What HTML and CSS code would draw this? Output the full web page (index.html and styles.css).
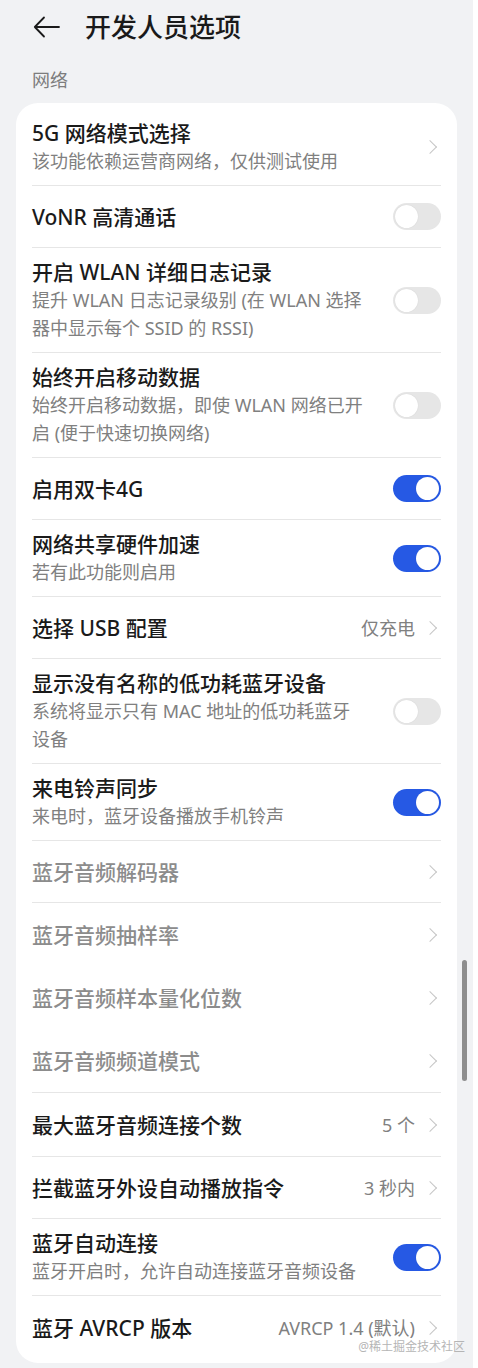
FILE: index.html
```html
<!DOCTYPE html>
<html lang="zh-CN">
<head>
    <meta charset="UTF-8">
    <meta name="viewport" content="width=device-width, initial-scale=1.0">
    <title>开发人员选项</title>
    <link rel="stylesheet" href="styles.css">
</head>
<body>
    <div class="page">
        <!-- Kop -->
        <div class="header">
            <svg class="back" width="27" height="22" viewBox="0 0 27 22">
                <path d="M11 1.5 L1.8 11 L11 20.5 M1.8 11 H26" fill="none" stroke="#1a1a1a" stroke-width="1.8" stroke-linecap="round" stroke-linejoin="round"/>
            </svg>
            <h1>开发人员选项</h1>
        </div>

        <div class="section-label">网络</div>

        <div class="card">
            <div class="row">
                <div class="text">
                    <div class="title">5G 网络模式选择</div>
                    <div class="sub">该功能依赖运营商网络，仅供测试使用</div>
                </div>
                <div class="trail"><span class="chev"></span></div>
            </div>
            <div class="row">
                <div class="text"><div class="title">VoNR 高清通话</div></div>
                <div class="trail"><span class="switch"></span></div>
            </div>
            <div class="row">
                <div class="text">
                    <div class="title">开启 WLAN 详细日志记录</div>
                    <div class="sub">提升 WLAN 日志记录级别 (在 WLAN 选择器中显示每个 SSID 的 RSSI)</div>
                </div>
                <div class="trail"><span class="switch"></span></div>
            </div>
            <div class="row">
                <div class="text">
                    <div class="title">始终开启移动数据</div>
                    <div class="sub">始终开启移动数据，即使 WLAN 网络已开启 (便于快速切换网络)</div>
                </div>
                <div class="trail"><span class="switch"></span></div>
            </div>
            <div class="row">
                <div class="text"><div class="title">启用双卡4G</div></div>
                <div class="trail"><span class="switch on"></span></div>
            </div>
            <div class="row">
                <div class="text">
                    <div class="title">网络共享硬件加速</div>
                    <div class="sub">若有此功能则启用</div>
                </div>
                <div class="trail"><span class="switch on"></span></div>
            </div>
            <div class="row">
                <div class="text"><div class="title">选择 USB 配置</div></div>
                <div class="trail"><span class="value">仅充电</span><span class="chev"></span></div>
            </div>
            <div class="row">
                <div class="text">
                    <div class="title">显示没有名称的低功耗蓝牙设备</div>
                    <div class="sub">系统将显示只有 MAC 地址的低功耗蓝牙设备</div>
                </div>
                <div class="trail"><span class="switch"></span></div>
            </div>
            <div class="row">
                <div class="text">
                    <div class="title">来电铃声同步</div>
                    <div class="sub">来电时，蓝牙设备播放手机铃声</div>
                </div>
                <div class="trail"><span class="switch on"></span></div>
            </div>
            <div class="row disabled">
                <div class="text"><div class="title">蓝牙音频解码器</div></div>
                <div class="trail"><span class="chev"></span></div>
            </div>
            <div class="row disabled no-line">
                <div class="text"><div class="title">蓝牙音频抽样率</div></div>
                <div class="trail"><span class="chev"></span></div>
            </div>
            <div class="row disabled no-line">
                <div class="text"><div class="title">蓝牙音频样本量化位数</div></div>
                <div class="trail"><span class="chev"></span></div>
            </div>
            <div class="row disabled wide">
                <div class="text"><div class="title">蓝牙音频频道模式</div></div>
                <div class="trail"><span class="chev"></span></div>
            </div>
            <div class="row wide">
                <div class="text"><div class="title">最大蓝牙音频连接个数</div></div>
                <div class="trail"><span class="value">5 个</span><span class="chev"></span></div>
            </div>
            <div class="row">
                <div class="text"><div class="title">拦截蓝牙外设自动播放指令</div></div>
                <div class="trail"><span class="value">3 秒内</span><span class="chev"></span></div>
            </div>
            <div class="row">
                <div class="text">
                    <div class="title">蓝牙自动连接</div>
                    <div class="sub">蓝牙开启时，允许自动连接蓝牙音频设备</div>
                </div>
                <div class="trail"><span class="switch on"></span></div>
            </div>
            <div class="row last">
                <div class="text"><div class="title">蓝牙 AVRCP 版本</div></div>
                <div class="trail"><span class="value">AVRCP 1.4 (默认)</span><span class="chev"></span></div>
            </div>
        </div>

        <!-- Overlay: scrollbalk en watermerk -->
        <div class="scrollbar"></div>
        <div class="watermark">@稀土掘金技术社区</div>
    </div>
</body>
</html>
```

FILE: styles.css
```css
body {
    margin: 0;
    background: #ffffff;
    font-family: "Noto Sans", "Noto Sans CJK SC", sans-serif;
    color: #1a1a1a;
}
.page {
    position: relative;
    width: 473px;
    height: 1368px;
    overflow: hidden;
    background: #f1f2f4;
}
.header {
    display: flex;
    align-items: center;
    height: 54px;
    padding-left: 33px;
    gap: 25px;
}
.back {
    display: block;
    flex: none;
}
h1 {
    margin: 0;
    font-size: 26px;
    font-weight: 500;
    line-height: 34px;
    color: #1a1a1a;
}
.section-label {
    margin: 14px 0 11px 32px;
    font-size: 18px;
    line-height: 24px;
    color: #7d7d7d;
}
.card {
    margin: 0 16px;
    padding: 6px 0 4px;
    background: #ffffff;
    border-radius: 22px;
}
.row {
    display: flex;
    align-items: center;
    gap: 18px;
    min-height: 62px;
    box-sizing: border-box;
    margin: 0 16px;
    padding: 10px 0;
    border-bottom: 1px solid #e6e6e6;
}
.row.no-line {
    border-bottom: none;
    min-height: 63px;
}
.row.wide {
    min-height: 64px;
}
.row.last {
    border-bottom: none;
    min-height: 63px;
}
.text {
    flex: 1;
    min-width: 0;
    max-width: 334px;
}
.title {
    font-size: 21px;
    line-height: 28px;
    font-weight: 500;
    color: #1a1a1a;
}
.sub {
    font-size: 18px;
    line-height: 28px;
    color: #808080;
}
.disabled .title {
    color: #8c8c8c;
}
.trail {
    flex: none;
    display: flex;
    align-items: center;
    gap: 10px;
    margin-left: auto;
}
.value {
    font-size: 18px;
    line-height: 18px;
    color: #808080;
}
.chev {
    display: block;
    width: 9px;
    height: 9px;
    margin: 0 6px 0 0;
    border-top: 1.5px solid #c6c6c6;
    border-right: 1.5px solid #c6c6c6;
    transform: rotate(45deg);
}
.switch {
    position: relative;
    display: block;
    width: 48px;
    height: 27px;
    border-radius: 14px;
    background: #e6e6e6;
}
.switch::after {
    content: "";
    position: absolute;
    top: 2px;
    left: 2px;
    width: 23px;
    height: 23px;
    border-radius: 50%;
    background: #ffffff;
    box-shadow: 0 0 1px rgba(0, 0, 0, 0.15);
}
.switch.on {
    background: #2659e4;
}
.switch.on::after {
    left: 23px;
}
.scrollbar {
    position: absolute;
    left: 462px;
    top: 960px;
    width: 5px;
    height: 121px;
    border-radius: 3px;
    background: #8e8e8e;
}
.watermark {
    position: absolute;
    right: 8px;
    top: 1341px;
    font-size: 12px;
    line-height: 12px;
    color: #b5b5b5;
}
```
